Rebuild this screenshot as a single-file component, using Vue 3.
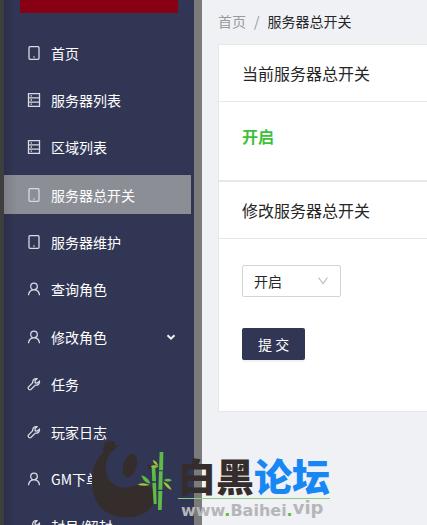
<!-- App.vue - Server master switch page -->
<template>
  <div class="layout">
    <aside class="sidebar">
      <div class="logo"></div>
      <nav class="menu">
        <a
          v-for="item in menu"
          :key="item.label"
          href="#"
          :class="['menu-item', { active: item.label === current }]"
          @click.prevent="current = item.label"
        >
          <svg class="menu-icon" viewBox="0 0 14 14" aria-hidden="true">
            <path :d="icons[item.icon]" />
          </svg>
          <span class="menu-label">{{ item.label }}</span>
          <svg v-if="item.children" class="menu-arrow" viewBox="0 0 10 10" aria-hidden="true">
            <path d="M1.5 3.2 5 6.6 8.5 3.2" />
          </svg>
        </a>
      </nav>
    </aside>

    <main class="content">
      <div class="breadcrumb">
        <a href="#" class="crumb">首页</a>
        <span class="separator">/</span>
        <span>服务器总开关</span>
      </div>

      <section class="card">
        <h2 class="card-head">当前服务器总开关</h2>
        <div class="card-body">
          <strong class="status">{{ status }}</strong>
        </div>
      </section>

      <section class="card">
        <h2 class="card-head">修改服务器总开关</h2>
        <form class="card-form" @submit.prevent="submit">
          <div class="select">
            <select v-model="selected" aria-label="修改服务器总开关">
              <option value="开启">开启</option>
              <option value="关闭">关闭</option>
            </select>
            <svg class="select-arrow" viewBox="0 0 12 12" aria-hidden="true">
              <path d="M1.5 2.5 6 8.7 10.5 2.5" />
            </svg>
          </div>
          <button type="submit" class="btn-primary">提 交</button>
        </form>
      </section>
    </main>

    <!-- Forum watermark over the page -->
    <div class="watermark">
      <svg class="panda" viewBox="270 120 252 240" aria-hidden="true">
        <g fill="#352d2b">
          <path d="M312 135C316 124 326 121 336 123C345 124 348 130 345 138L361 133L343 148C330 158 318 176 317 203C316 232 333 253 358 261C374 266 386 262 401 258C420 254 443 254 456 263C466 271 469 288 466 300C460 313 455 318 449 327C438 339 425 342 414 347C395 353 366 354 342 347C323 341 306 328 295 313C280 293 274 263 276 232C278 202 290 175 310 158C309 150 309 142 312 135Z" />
          <ellipse cx="390" cy="197" rx="20" ry="36" transform="rotate(17 390 197)" />
          <path d="M441 192 456 200 454 206 446 208Z" />
        </g>
        <g fill="#5ebb46">
          <path d="M479 156H490L489 211H477ZM477 214H488L487 269H475ZM475 273H487L485 330H474Z" />
          <path d="M455 200H466L468 244H457ZM457 248H468L470 312H461Z" />
          <path d="M424 226C436 228 448 239 451 251C438 250 428 239 424 226ZM492 240C500 234 511 236 516 241C507 247 498 246 492 240Z" />
        </g>
        <g fill="#a2c62c">
          <path d="M458 180C467 182 473 189 475 198C466 195 460 189 458 180ZM452 200C460 193 469 195 476 200C467 204 459 204 452 200Z" />
          <path d="M413 254C424 248 438 249 448 256C436 258 424 258 413 254ZM490 245C502 248 511 258 515 270C503 265 494 257 490 245Z" />
        </g>
      </svg>
      <div class="watermark-text">
        <div class="watermark-name">白黑<span>论坛</span></div>
        <div class="watermark-url">www<i>.</i>Baihei<i>.</i><b>vip</b></div>
      </div>
    </div>
  </div>
</template>

<script setup>
import { ref } from 'vue';

const icons = {
  mobile: 'M3 .7H11Q12 .7 12 1.7V12.3Q12 13.3 11 13.3H3Q2 13.3 2 12.3V1.7Q2 .7 3 .7ZM6.4 11H7.6',
  database: 'M1.5 .7H12.5V13.3H1.5ZM1.5 4.9H12.5M1.5 9.1H12.5M3.6 2.8H5M3.6 7H5M3.6 11.2H5',
  user: 'M7 1.2A3.3 3.3 0 0 1 7 7.8A3.3 3.3 0 0 1 7 1.2ZM1.5 13.2C1.8 9.8 4 7.8 7 7.8S12.2 9.8 12.5 13.2',
  tool: 'M12.4 4.2 10.4 6 8.3 5.8 8 3.7 9.9 1.7C7.6 1 5.3 2.9 5.8 5.6L1.4 10.1Q.8 11 1.7 12.2Q3 13.2 3.9 12.5L8.3 8.1C11 8.6 13 6.5 12.4 4.2Z'
};

const menu = [
  { label: '首页', icon: 'mobile' },
  { label: '服务器列表', icon: 'database' },
  { label: '区域列表', icon: 'database' },
  { label: '服务器总开关', icon: 'mobile' },
  { label: '服务器维护', icon: 'mobile' },
  { label: '查询角色', icon: 'user' },
  { label: '修改角色', icon: 'user', children: true },
  { label: '任务', icon: 'tool' },
  { label: '玩家日志', icon: 'tool' },
  { label: 'GM下单', icon: 'user' },
  { label: '封号/解封', icon: 'tool' }
];

const current = ref('服务器总开关');
const status = ref('开启');
const selected = ref('开启');

function submit() {
  status.value = selected.value;
}
</script>

<style>
body {
  margin: 0;
  background: #eff1f5;
}
</style>

<style scoped>
.layout {
  position: relative;
  display: flex;
  height: 100vh;
  overflow: hidden;
  font-family: "Noto Sans CJK SC", sans-serif;
  font-size: 14px;
  line-height: 22px;
  color: #262626;
}

.sidebar {
  box-sizing: border-box;
  flex: 0 0 202px;
  overflow: hidden;
  border-left: 4px solid #3d3e3d;
  border-right: 8px solid #7b7b7b;
  background: linear-gradient(90deg, #2b2f49, #323655 10px);
}

.logo {
  height: 13px;
  margin: 0 16px 20px;
  background: #870014;
}

.menu {
  display: flex;
  flex-direction: column;
  justify-content: space-between;
  min-height: 513px;
}

.menu-item {
  display: flex;
  align-items: center;
  gap: 10px;
  height: 39px;
  margin-right: 3px;
  padding: 0 15px 0 23px;
  box-sizing: border-box;
  color: #fff;
  text-decoration: none;
}

.menu-item.active {
  background: linear-gradient(90deg, #7d8088, #8b8e95 14px);
}

.menu-label {
  flex: 1;
}

.menu-icon {
  width: 14px;
  height: 14px;
  fill: none;
  stroke: #d9dae2;
  stroke-width: 1.3;
}

.menu-arrow {
  width: 10px;
  height: 10px;
  fill: none;
  stroke: #f0f0f4;
  stroke-width: 2;
}

.content {
  flex: 1;
  min-width: 0;
  padding: 10px 0 0 16px;
}

.breadcrumb {
  display: flex;
  gap: 8px;
  margin-bottom: 12px;
}

.crumb,
.separator {
  color: #999a9c;
  text-decoration: none;
}

.card {
  border: 1px solid #e6e7e9;
  border-right: none;
  background: #fff;
}

.card-head {
  margin: 0;
  padding: 16px 23px;
  border-bottom: 1px solid #e8e8e8;
  font-size: 16px;
  font-weight: 400;
  line-height: 24px;
}

.card-body {
  padding: 23px 23px 32px;
}

.status {
  font-size: 16px;
  color: #3cc13a;
}

.card-form {
  display: flex;
  flex-direction: column;
  align-items: flex-start;
  gap: 31px;
  padding: 26px 23px 51px;
}

.select {
  position: relative;
  width: 99px;
}

.select select {
  display: block;
  width: 100%;
  height: 32px;
  box-sizing: border-box;
  padding: 0 11px;
  border: 1px solid #d4d4d4;
  border-radius: 2px;
  appearance: none;
  background: #fff;
  color: #262626;
  font: inherit;
}

.select-arrow {
  position: absolute;
  top: 10px;
  right: 12px;
  width: 12px;
  height: 12px;
  fill: none;
  stroke: #bfbfbf;
  stroke-width: 1.2;
  pointer-events: none;
}

.btn-primary {
  height: 32px;
  padding: 0 16px;
  border: none;
  border-radius: 2px;
  background: #323655;
  box-shadow: 0 2px 0 rgba(0, 0, 0, 0.05);
  color: #fff;
  font: inherit;
  cursor: pointer;
}

.watermark {
  position: absolute;
  top: 440px;
  left: 90px;
  display: flex;
  gap: 4px;
  pointer-events: none;
}

.panda {
  width: 84px;
  height: 80px;
}

.watermark-text {
  padding-top: 16px;
}

.watermark-name {
  padding-bottom: 4px;
  border-bottom: 1px solid #8acb7c;
  color: #352d2b;
  font-size: 38px;
  font-weight: 900;
  line-height: 38px;
  white-space: nowrap;
}

.watermark-name span {
  color: #1787f5;
}

.watermark-url {
  padding-left: 3px;
  color: #b5b6b8;
  font-family: "DejaVu Sans", sans-serif;
  font-size: 16px;
  font-weight: 700;
  line-height: 22px;
}

.watermark-url i {
  color: #5ebb46;
  font-style: normal;
}

.watermark-url b {
  font-size: 18px;
  line-height: 18px;
  vertical-align: 2px;
}
</style>
